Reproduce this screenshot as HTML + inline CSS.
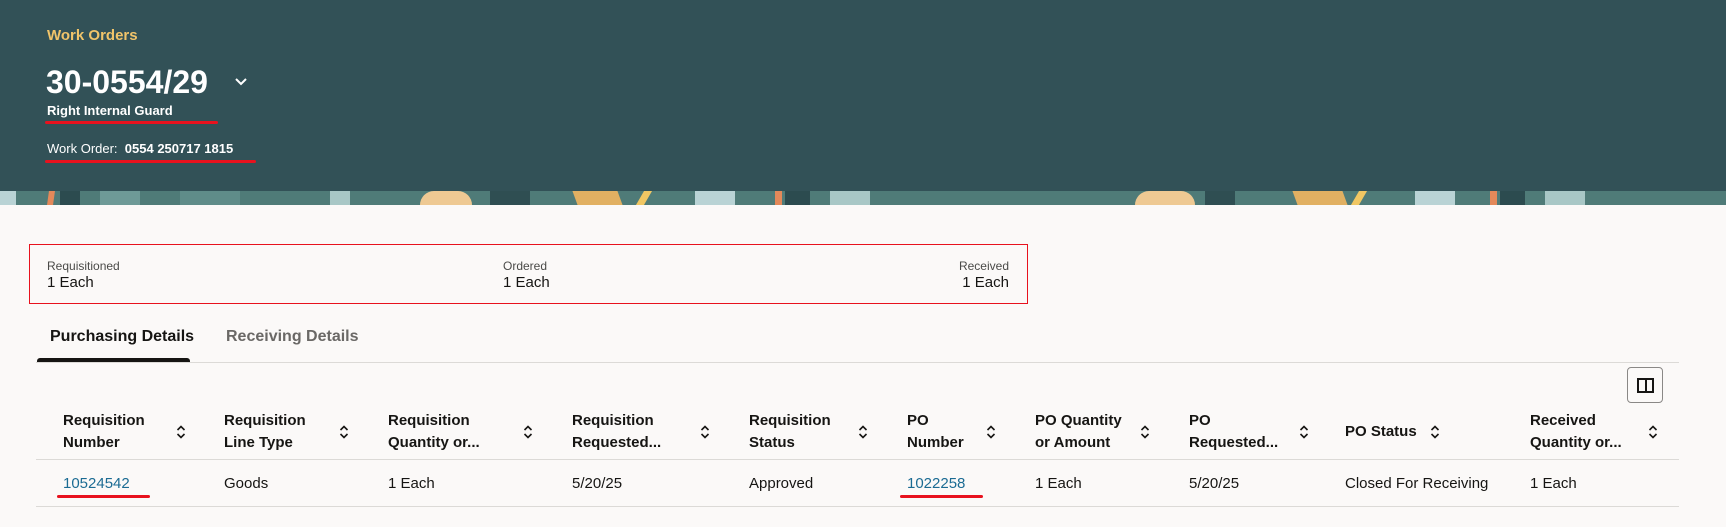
<!DOCTYPE html>
<html><head><meta charset="utf-8"><style>
*{margin:0;padding:0;box-sizing:border-box}
body{width:1726px;height:527px;overflow:hidden;background:#fbf9f8;font-family:"Liberation Sans",sans-serif;color:#161513;position:relative}
.a{position:absolute;white-space:nowrap}
.hdr{position:absolute;left:0;top:0;width:1726px;height:192px;background:#325157}
.pat{position:absolute;left:0;top:191px;width:1726px;height:14px;background:#4f7b78;overflow:hidden}
.pat div{position:absolute;top:0;height:14px}
.red{position:absolute;height:3px;background:#e8121e;border-radius:2px}
.th{font-size:15px;font-weight:bold;line-height:22px}
.td{font-size:15px;top:475px}
.lnk{color:#1b6b93}
.sort{position:absolute;width:10px;height:14px}
.hl{position:absolute;left:36px;width:1643px;height:1px;background:#dcdad7}
</style></head><body>
<div class="hdr"></div>
<div class="pat">
<div style="left:0;width:16px;background:#b9d3d5"></div>
<div style="left:48px;width:6px;background:#e3895a;transform:skewX(-8deg)"></div>
<div style="left:60px;width:20px;background:#2c4b4f"></div>
<div style="left:100px;width:40px;background:#6e9a97"></div>
<div style="left:180px;width:60px;background:#5f8c89"></div>
<div style="left:330px;width:20px;background:#a8c7c6"></div>
<div style="left:420px;width:52px;background:#eec993;border-radius:20px 20px 0 0"></div>
<div style="left:490px;width:40px;background:#2f4e52"></div>
<div style="left:575px;width:45px;background:#e1b062;transform:skewX(20deg)"></div>
<div style="left:640px;width:8px;background:#f1c763;transform:skewX(-30deg)"></div>
<div style="left:695px;width:40px;background:#b9d3d5"></div>
<div style="left:775px;width:7px;background:#e3895a"></div>
<div style="left:785px;width:25px;background:#2c4b4f"></div>
<div style="left:830px;width:40px;background:#a8c7c6"></div>
<div style="left:1135px;width:60px;background:#eec993;border-radius:20px 20px 0 0"></div>
<div style="left:1205px;width:30px;background:#2f4e52"></div>
<div style="left:1295px;width:50px;background:#e1b062;transform:skewX(20deg)"></div>
<div style="left:1355px;width:8px;background:#f1c763;transform:skewX(-30deg)"></div>
<div style="left:1415px;width:40px;background:#b9d3d5"></div>
<div style="left:1490px;width:7px;background:#e3895a"></div>
<div style="left:1500px;width:25px;background:#2c4b4f"></div>
<div style="left:1545px;width:40px;background:#a8c7c6"></div>
</div>

<div class="a" style="left:47px;top:27px;font-size:15px;font-weight:bold;color:#f0c46a">Work Orders</div>
<div class="a" style="left:46px;top:64px;font-size:32px;font-weight:bold;color:#fff">30-0554/29</div>
<svg class="a" style="left:234px;top:77px" width="14" height="10" viewBox="0 0 14 10"><path d="M2 2l5 5 5-5" fill="none" stroke="#fff" stroke-width="2"/></svg>
<div class="a" style="left:47px;top:103px;font-size:13px;font-weight:bold;color:#fff">Right Internal Guard</div>
<div class="red" style="left:45px;top:121px;width:173px"></div>
<div class="a" style="left:47px;top:141px;font-size:13px;color:#fff">Work Order:&nbsp; <b>0554 250717 1815</b></div>
<div class="red" style="left:45px;top:160px;width:211px"></div>

<div class="a" style="left:29px;top:244px;width:999px;height:60px;border:1px solid #e8121e"></div>
<div class="a" style="left:47px;top:259px;font-size:12px;color:#4a4a48">Requisitioned</div>
<div class="a" style="left:47px;top:274px;font-size:15px">1 Each</div>
<div class="a" style="left:503px;top:259px;font-size:12px;color:#4a4a48">Ordered</div>
<div class="a" style="left:503px;top:274px;font-size:15px">1 Each</div>
<div class="a" style="left:900px;width:109px;text-align:right;top:259px;font-size:12px;color:#4a4a48">Received</div>
<div class="a" style="left:900px;width:109px;text-align:right;top:274px;font-size:15px">1 Each</div>

<div class="a" style="left:50px;top:328px;font-size:16px;font-weight:bold">Purchasing Details</div>
<div class="a" style="left:226px;top:328px;font-size:16px;font-weight:bold;color:#6a6866">Receiving Details</div>
<div class="hl" style="top:362px"></div>
<div class="a" style="left:37px;top:358px;width:153px;height:4px;background:#161513;border-radius:3px 3px 0 0"></div>

<div class="a" style="left:1627px;top:367px;width:36px;height:36px;border:1px solid #8a8886;border-radius:4px"></div>
<div class="a" style="left:1637px;top:378px;width:17px;height:15px;border:2px solid #161513"></div>
<div class="a" style="left:1645px;top:378px;width:2px;height:15px;background:#161513"></div>

<div class="a th" style="left:63px;top:410px">Requisition<br>Number</div>
<div class="a th" style="left:224px;top:410px">Requisition<br>Line Type</div>
<div class="a th" style="left:388px;top:410px">Requisition<br>Quantity or...</div>
<div class="a th" style="left:572px;top:410px">Requisition<br>Requested...</div>
<div class="a th" style="left:749px;top:410px">Requisition<br>Status</div>
<div class="a th" style="left:907px;top:410px">PO<br>Number</div>
<div class="a th" style="left:1035px;top:410px">PO Quantity<br>or Amount</div>
<div class="a th" style="left:1189px;top:410px">PO<br>Requested...</div>
<div class="a th" style="left:1345px;top:421px">PO Status</div>
<div class="a th" style="left:1530px;top:410px">Received<br>Quantity or...</div>

<svg width="0" height="0" style="position:absolute"><defs><symbol id="s" viewBox="0 0 10 14"><path d="M1.5 5L5 1.5 8.5 5M1.5 9L5 12.5 8.5 9" fill="none" stroke="#161513" stroke-width="1.6"/></symbol></defs></svg>
<svg class="sort" style="left:176px;top:425px"><use href="#s"/></svg>
<svg class="sort" style="left:339px;top:425px"><use href="#s"/></svg>
<svg class="sort" style="left:523px;top:425px"><use href="#s"/></svg>
<svg class="sort" style="left:700px;top:425px"><use href="#s"/></svg>
<svg class="sort" style="left:858px;top:425px"><use href="#s"/></svg>
<svg class="sort" style="left:986px;top:425px"><use href="#s"/></svg>
<svg class="sort" style="left:1140px;top:425px"><use href="#s"/></svg>
<svg class="sort" style="left:1299px;top:425px"><use href="#s"/></svg>
<svg class="sort" style="left:1430px;top:425px"><use href="#s"/></svg>
<svg class="sort" style="left:1648px;top:425px"><use href="#s"/></svg>

<div class="hl" style="top:459px"></div>
<div class="a td lnk" style="left:63px">10524542</div>
<div class="a td" style="left:224px">Goods</div>
<div class="a td" style="left:388px">1 Each</div>
<div class="a td" style="left:572px">5/20/25</div>
<div class="a td" style="left:749px">Approved</div>
<div class="a td lnk" style="left:907px">1022258</div>
<div class="a td" style="left:1035px">1 Each</div>
<div class="a td" style="left:1189px">5/20/25</div>
<div class="a td" style="left:1345px">Closed For Receiving</div>
<div class="a td" style="left:1530px">1 Each</div>
<div class="red" style="left:57px;top:495px;width:93px"></div>
<div class="red" style="left:900px;top:495px;width:83px"></div>
<div class="hl" style="top:506px"></div>
</body></html>
